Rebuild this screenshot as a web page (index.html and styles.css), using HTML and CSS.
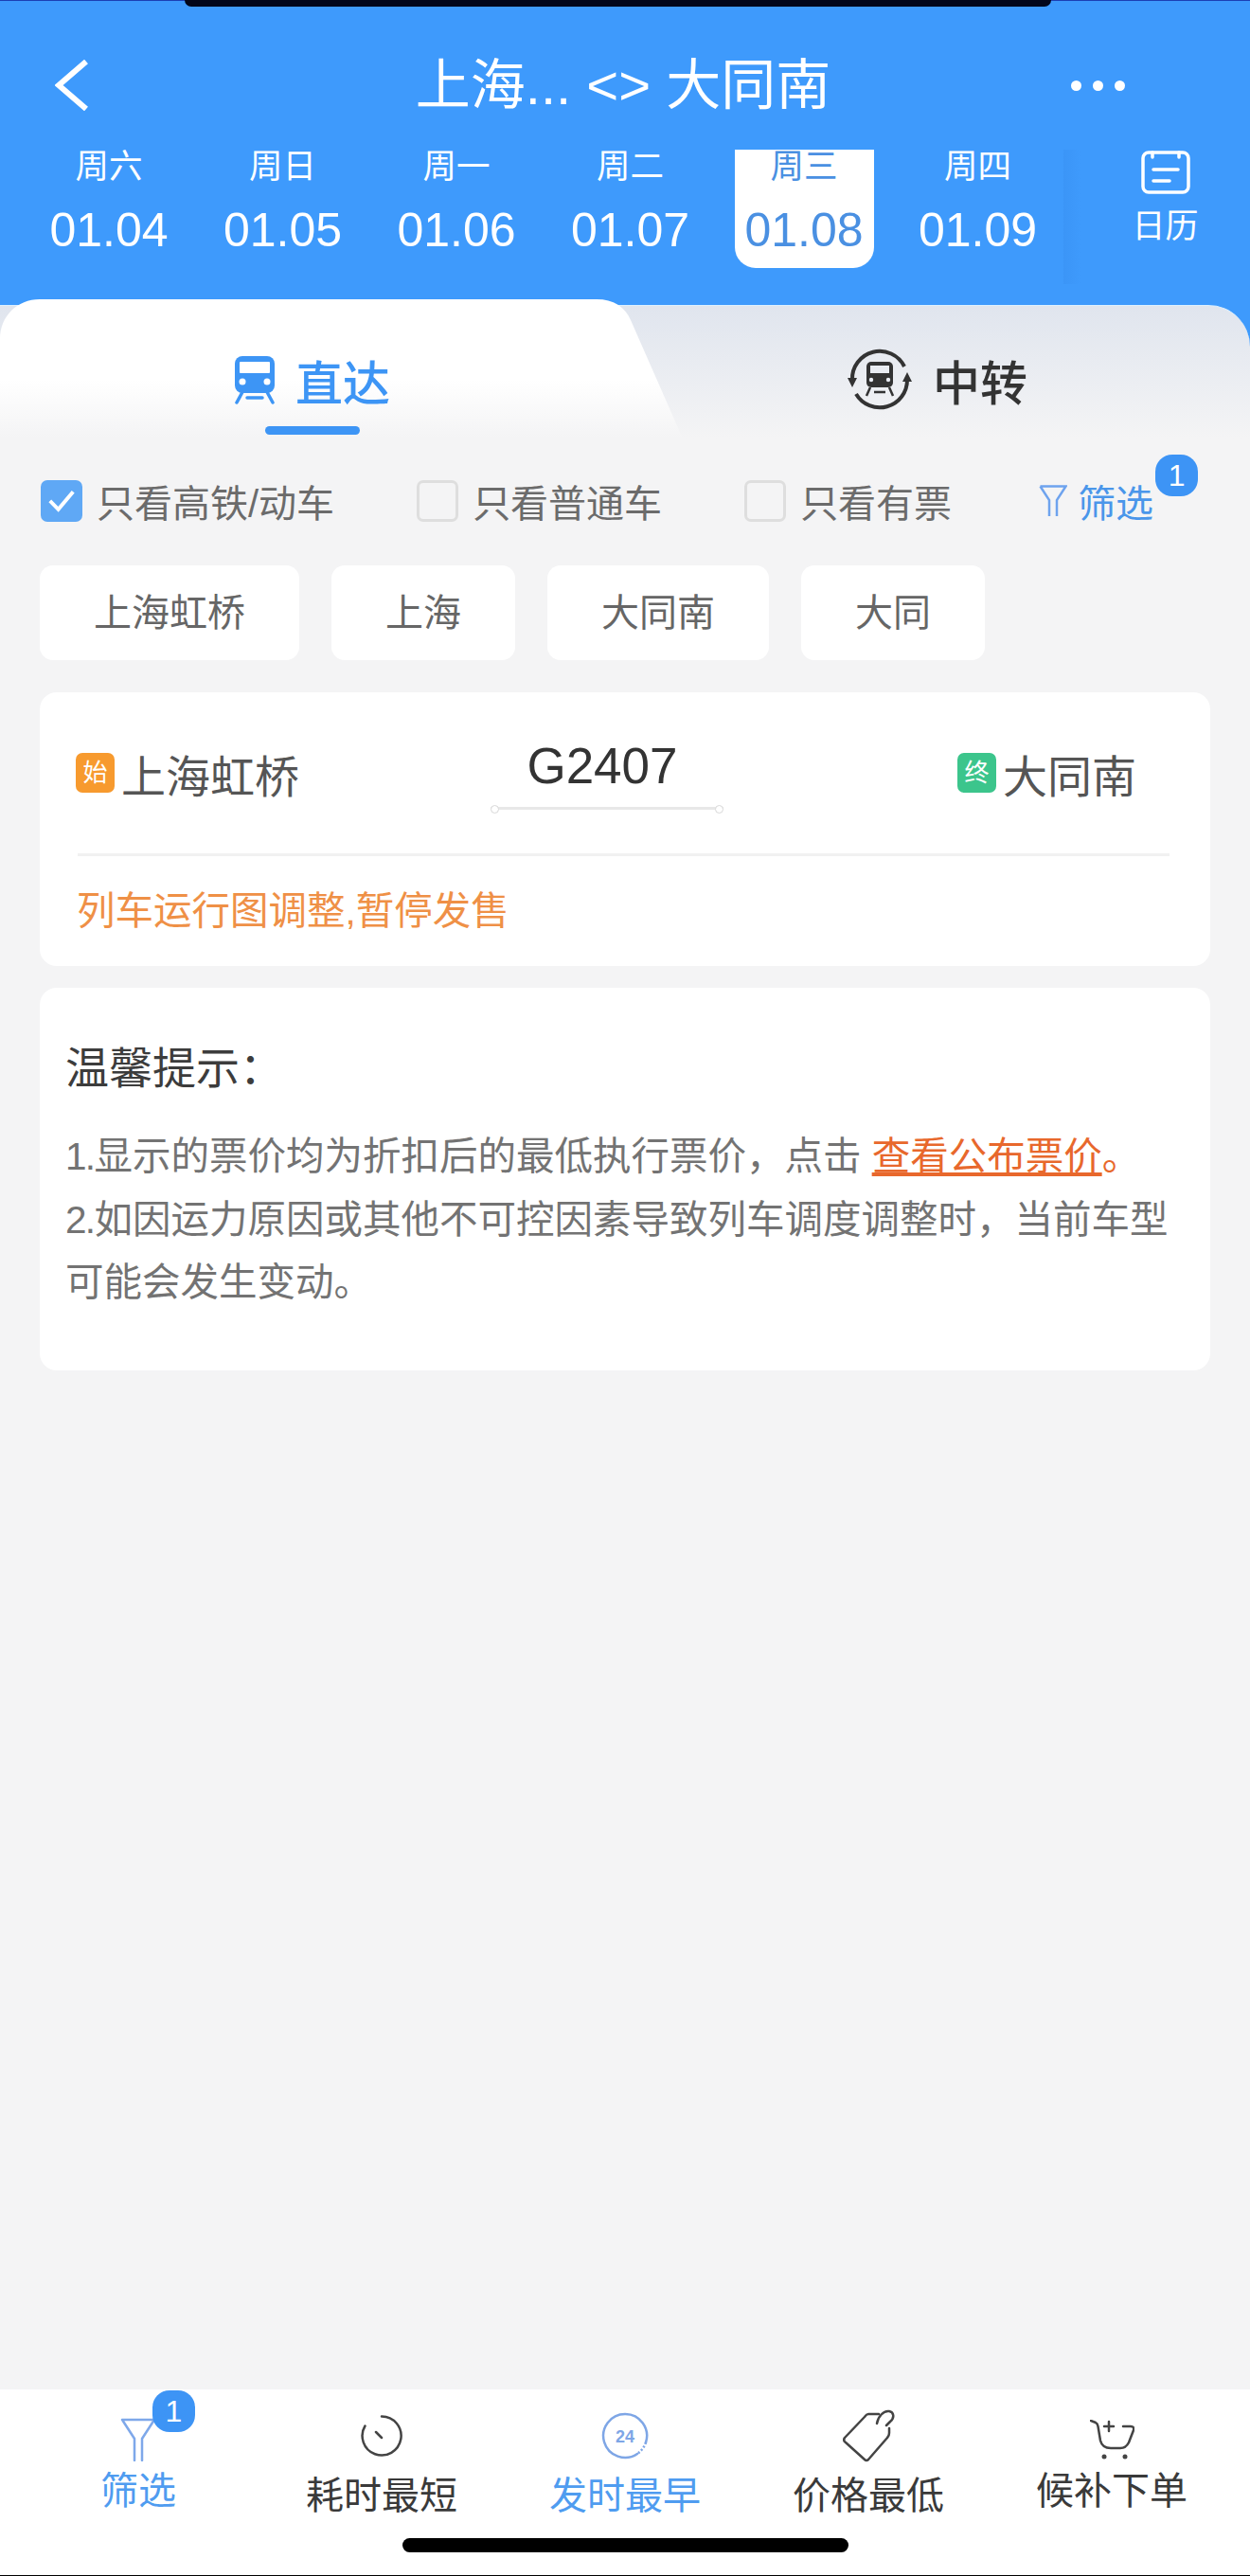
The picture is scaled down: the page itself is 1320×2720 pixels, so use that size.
FILE: index.html
```html
<!DOCTYPE html>
<html lang="zh-CN">
<head>
    <meta charset="UTF-8">
    <meta name="viewport" content="width=device-width, initial-scale=1.0">
    <title>上海 - 大同南</title>
    <link rel="stylesheet" href="styles.css">
</head>
<body>
    <div class="app">
        <div class="notch"></div>

        <header class="header">
            <div class="topbar">
                <svg class="back" viewBox="0 0 36 54"><path d="M33 2L4 27L33 52"/></svg>
                <div class="title">上海... &lt;&gt; 大同南</div>
                <div class="more"><i></i><i></i><i></i></div>
            </div>
            <div class="dates">
                <div class="date-list">
                    <div class="date"><span class="week">周六</span><span class="day">01.04</span></div>
                    <div class="date"><span class="week">周日</span><span class="day">01.05</span></div>
                    <div class="date"><span class="week">周一</span><span class="day">01.06</span></div>
                    <div class="date"><span class="week">周二</span><span class="day">01.07</span></div>
                    <div class="date date-active"><span class="week">周三</span><span class="day">01.08</span></div>
                    <div class="date"><span class="week">周四</span><span class="day">01.09</span></div>
                </div>
                <div class="calendar">
                    <svg class="calendar-icon" viewBox="0 0 52 46">
                        <rect x="2" y="2" width="48" height="42" rx="6"/>
                        <path d="M12 2V7M40 2V7M13 20H39M13 32H30"/>
                    </svg>
                    <span>日历</span>
                </div>
            </div>
        </header>

        <main class="content">
            <div class="tabs">
                <div class="tab tab-direct">
                    <div class="tab-row">
                        <svg class="train-icon" viewBox="0 0 42 51">
                            <rect width="42" height="39" rx="8" fill="#3d95f5"/>
                            <rect x="5" y="6" width="32" height="12" rx="1" fill="#fff"/>
                            <circle cx="8" cy="27" r="3.5" fill="#fff"/>
                            <circle cx="34" cy="27" r="3.5" fill="#fff"/>
                            <path d="M8 38L2 49M34 38L40 49M13 44H29" stroke="#3d95f5" stroke-width="3.5" stroke-linecap="round"/>
                        </svg>
                        <span>直达</span>
                    </div>
                    <div class="tab-line"></div>
                </div>
                <div class="tab tab-transfer">
                    <div class="tab-row">
                        <svg class="transfer-icon" viewBox="0 0 68 68">
                            <path d="M5 34A29 29 0 0 1 60 20M63 34A29 29 0 0 1 9 49" fill="none" stroke="#333" stroke-width="4"/>
                            <path d="M0 32H10L5 42ZM58 36H68L63 26Z" fill="#333"/>
                            <rect x="20" y="15" width="28" height="27" rx="5" fill="#333"/>
                            <rect x="24" y="19" width="20" height="8" fill="#e9ecf2"/>
                            <circle cx="25" cy="34" r="2.2" fill="#e9ecf2"/>
                            <circle cx="43" cy="34" r="2.2" fill="#e9ecf2"/>
                            <path d="M24 42L20 51M44 42L48 51M28 47H40" stroke="#333" stroke-width="2.5"/>
                        </svg>
                        <span>中转</span>
                    </div>
                </div>
            </div>

            <div class="filters">
                <label class="check">
                    <span class="box box-on">
                        <svg viewBox="0 0 45 43"><path d="M10 22L19 31L35 12"/></svg>
                    </span>
                    只看高铁/动车
                </label>
                <label class="check"><span class="box"></span>只看普通车</label>
                <label class="check"><span class="box"></span>只看有票</label>
                <div class="filter-link">
                    <svg class="funnel" viewBox="0 0 30 34"><path d="M1.5 1.5H28.5L19 16V33M11 33V16L1.5 1.5"/></svg>
                    筛选
                    <span class="badge badge-top">1</span>
                </div>
            </div>

            <div class="chips">
                <div class="chip">上海虹桥</div>
                <div class="chip">上海</div>
                <div class="chip">大同南</div>
                <div class="chip">大同</div>
            </div>

            <section class="card train-card">
                <div class="train-row">
                    <div class="station">
                        <span class="tag tag-start">始</span>上海虹桥
                    </div>
                    <div class="train-no">
                        <span>G2407</span>
                        <div class="train-line"></div>
                    </div>
                    <div class="station station-end">
                        <span class="tag tag-end">终</span>大同南
                    </div>
                </div>
                <div class="divider"></div>
                <div class="alert">列车运行图调整,暂停发售</div>
            </section>

            <section class="card tips">
                <h2>温馨提示<span class="colon">：</span></h2>
                <p><span class="num">1.</span>显示的票价均为折扣后的最低执行票价，点击 <span class="orange"><u>查看公布票价</u>。</span></p>
                <p><span class="num">2.</span>如因运力原因或其他不可控因素导致列车调度调整时，当前车型</p>
                <p>可能会发生变动。</p>
            </section>
        </main>

        <footer class="bottom">
            <nav class="bottom-nav">
                <div class="nav-item nav-blue">
                    <div class="nav-icon">
                        <svg class="nav-funnel" viewBox="0 0 38 46"><path d="M2 2H36L23 22V45M15 45V22L2 2"/></svg>
                        <span class="badge badge-nav">1</span>
                    </div>
                    <span class="nav-label nav-label-up">筛选</span>
                </div>
                <div class="nav-item">
                    <div class="nav-icon">
                        <svg class="nav-timer" viewBox="0 0 46 46">
                            <path d="M23 2.500A20.500 20.500 0 1 1 5.500 12.500M17 19L23 25"/>
                        </svg>
                    </div>
                    <span class="nav-label">耗时最短</span>
                </div>
                <div class="nav-item nav-blue">
                    <div class="nav-icon">
                        <svg class="nav-clock" viewBox="0 0 50 50">
                            <path d="M38 44A23 23 0 1 1 47 32"/>
                            <path class="clock-dash" d="M47 32A23 23 0 0 1 38 44"/>
                            <text x="25" y="32" text-anchor="middle">24</text>
                        </svg>
                    </div>
                    <span class="nav-label">发时最早</span>
                </div>
                <div class="nav-item">
                    <div class="nav-icon">
                        <svg class="nav-tag" viewBox="0 0 55 56">
                            <path d="M38 5H27Q25 5 23 8L2 30Q0 33 3 35L23 53Q25 55 27 53L47 30Q49 28 49 25V20"/>
                            <path d="M36 15C37 8 43 1 49 2C54 3 55 9 50 13L46 17"/>
                        </svg>
                    </div>
                    <span class="nav-label">价格最低</span>
                </div>
                <div class="nav-item">
                    <div class="nav-icon">
                        <svg class="nav-cart" viewBox="0 0 47 42">
                            <path d="M1 1L6 3Q8 4 8.500 7L11 22Q13 30 22 30H32Q38 30 41 24L46 11Q47 7 43 7H35M15 7H25M20 2V12"/>
                            <circle cx="15" cy="39" r="2.500"/>
                            <circle cx="37" cy="39" r="2.500"/>
                        </svg>
                    </div>
                    <span class="nav-label nav-label-up">候补下单</span>
                </div>
            </nav>
            <div class="home-bar"></div>
        </footer>
    </div>
</body>
</html>
```

FILE: styles.css
```css
* {
    box-sizing: border-box;
}

body {
    margin: 0;
    font-family: "Liberation Sans", "Noto Sans CJK SC", sans-serif;
    background-color: #f4f4f5;
}

.app {
    position: relative;
    display: flex;
    flex-direction: column;
    height: 2720px;
    overflow: hidden;
    background-color: #f4f4f5;
}

.notch {
    position: absolute;
    top: 0;
    left: 195px;
    width: 915px;
    height: 7px;
    background-color: #02061a;
    border-radius: 0 0 20px 20px;
}

/* header */
.header {
    height: 316px;
    padding-top: 58px;
    color: #fff;
    background-color: #3e9afc;
    box-shadow: inset 0 1px #1c3fb4;
}

.topbar {
    display: grid;
    grid-template-columns: 1fr auto 1fr;
    align-items: center;
    height: 64px;
    padding: 0 62px 0 58px;
}

.back {
    width: 36px;
    height: 54px;
    fill: none;
    stroke: #fff;
    stroke-width: 6;
}

.title {
    font-size: 58px;
    line-height: 64px;
    white-space: nowrap;
}

.more {
    display: flex;
    justify-content: flex-end;
    gap: 12px;
    margin-right: 70px;
}

.more i {
    width: 11px;
    height: 11px;
    border-radius: 50%;
    background-color: #fff;
}

.dates {
    display: flex;
    margin-top: 36px;
}

.date-list {
    display: flex;
    flex: 0 0 1123px;
    gap: 36.5px;
    padding-left: 41.5px;
}

.date {
    width: 147px;
    height: 125px;
    text-align: center;
    white-space: nowrap;
}

.date-active {
    color: #4a90e2;
    background-color: #fff;
    border-radius: 0 0 22px 22px;
}

.week {
    display: block;
    height: 36px;
    font-size: 35.500px;
    line-height: 36px;
}

.day {
    display: block;
    margin-top: 21px;
    font-size: 50px;
    line-height: 56px;
}

.calendar {
    display: flex;
    flex: 1;
    flex-direction: column;
    align-items: center;
    height: 142px;
    padding-left: 18px;
    font-size: 35px;
    line-height: 44px;
    background: linear-gradient(90deg, #3b95f7, #3e9afc 9%);
}

.calendar-icon {
    flex: none;
    width: 52px;
    height: 46px;
    margin-top: 1px;
    margin-bottom: 12px;
    fill: none;
    stroke: #fff;
    stroke-width: 3.5;
    stroke-linecap: round;
}

/* tabs */
.tabs {
    position: relative;
    display: flex;
    height: 154px;
    background-color: #3e9afc;
}

.tabs::before {
    content: "";
    position: absolute;
    top: 6px;
    right: 0;
    bottom: 0;
    left: 0;
    border-top: 1px solid #dcf0ff;
    border-radius: 0 44px 0 0;
    background: linear-gradient(180deg, #e0e5ee, #f4f4f5 95%);
}

.tabs::after {
    content: "";
    position: absolute;
    top: 0;
    left: 0;
    width: 730px;
    height: 154px;
    background: linear-gradient(180deg, #fff 55%, #f4f4f5 95%);
    clip-path: path("M0 154V42C0 18 18 0 42 0H630C648 0 660 8 666 22L724 154Z");
}

.tab {
    position: relative;
    z-index: 1;
    display: flex;
    flex: 1;
    flex-direction: column;
    align-items: center;
    padding-top: 55px;
    font-size: 50px;
    font-weight: 500;
}

.tab-row {
    display: flex;
    align-items: center;
    gap: 22px;
    height: 60px;
}

.tab-direct {
    color: #3d95f5;
}

.tab-transfer {
    color: #333;
}

.train-icon {
    width: 42px;
    height: 51px;
}

.transfer-icon {
    width: 68px;
    height: 68px;
}

.tab-line {
    width: 100px;
    height: 9px;
    margin-top: 19px;
    border-radius: 5px;
    background-color: #3d95f5;
}

/* filter row */
.filters {
    display: flex;
    align-items: center;
    gap: 87px;
    height: 44px;
    margin-top: 37px;
    padding-left: 43px;
    font-size: 40px;
    color: #6b6b6b;
    white-space: nowrap;
}

.check {
    display: flex;
    align-items: center;
    gap: 15px;
}

.box {
    width: 44px;
    height: 44px;
    border: 3px solid #dedede;
    border-radius: 7px;
}

.box-on {
    border: 0;
    background-color: #5fa8f5;
}

.box-on svg {
    display: block;
    width: 44px;
    height: 43px;
    fill: none;
    stroke: #fff;
    stroke-width: 4;
}

.filter-link {
    position: relative;
    display: flex;
    align-items: center;
    gap: 11px;
    margin-left: 5px;
    color: #4a96ea;
}

.funnel {
    width: 30px;
    height: 34px;
    fill: none;
    stroke: #6ea3ee;
    stroke-width: 2.5;
}

.badge {
    position: absolute;
    width: 45px;
    height: 44px;
    border-radius: 18px;
    font-size: 32px;
    line-height: 44px;
    text-align: center;
    color: #fff;
    background-color: #3d94f5;
}

.badge-top {
    top: -20px;
    left: 123px;
}

.badge-nav {
    top: -20px;
    left: 34px;
}

/* station chips */
.chips {
    display: flex;
    gap: 34px;
    margin-top: 46px;
    padding-left: 42px;
}

.chip {
    height: 100px;
    padding: 0 57px;
    border-radius: 14px;
    font-size: 40px;
    line-height: 100px;
    color: #666;
    background-color: #fff;
}

/* cards */
.card {
    margin: 0 42px;
    border-radius: 18px;
    background-color: #fff;
}

.train-card {
    height: 289px;
    margin-top: 34px;
    padding: 50px 43px 0 38px;
}

.train-row {
    display: grid;
    grid-template-columns: 438px 246px 1fr;
    height: 120px;
}

.station {
    display: flex;
    align-items: center;
    gap: 7px;
    height: 70px;
    font-size: 47px;
    color: #555;
}

.station-end {
    margin-left: 247px;
    white-space: nowrap;
}

.tag {
    width: 41px;
    height: 42px;
    border-radius: 7px;
    font-size: 26px;
    line-height: 42px;
    text-align: center;
    color: #fff;
}

.tag-start {
    background-color: #f79a2e;
}

.tag-end {
    background-color: #3cc58c;
}

.train-no {
    text-align: center;
    font-size: 53px;
    line-height: 56px;
    color: #333;
}

.train-no span {
    position: relative;
    left: -5px;
}

.train-line {
    position: relative;
    height: 3px;
    margin-top: 15px;
    background-color: #e8e8e8;
}

.train-line::before,
.train-line::after {
    content: "";
    position: absolute;
    top: -2px;
    width: 7px;
    height: 7px;
    border: 1px solid #d8d8d8;
    border-radius: 50%;
    background-color: #fff;
}

.train-line::before {
    left: 0;
}

.train-line::after {
    right: 0;
}

.divider {
    height: 3px;
    margin-left: 2px;
    background-color: #f1f1f1;
}

.alert {
    margin-top: 33px;
    margin-left: 1px;
    font-size: 40.500px;
    line-height: 50px;
    color: #ef9046;
    white-space: nowrap;
}

.tips {
    height: 404px;
    margin-top: 23px;
    padding: 54px 20px 0 27px;
}

.tips h2 {
    margin: 0 0 33px;
    font-size: 46px;
    font-weight: 400;
    line-height: 54px;
    color: #3c3c3c;
}

.colon {
    font-family: "Noto Sans CJK TC", sans-serif;
}

.tips p {
    margin: 0;
    font-size: 40.500px;
    line-height: 66.500px;
    color: #737373;
    white-space: nowrap;
}

.num {
    letter-spacing: -1.700px;
}

.orange {
    color: #e8682c;
}

/* bottom bar */
.bottom {
    display: flex;
    flex-direction: column;
    align-items: center;
    height: 197px;
    margin-top: auto;
    padding-top: 21px;
    border-bottom: 1px solid #000;
    background-color: #fff;
}

.bottom-nav {
    display: grid;
    grid-template-columns: repeat(5, 257px);
    justify-content: center;
    width: 100%;
}

.nav-item {
    display: flex;
    flex-direction: column;
    align-items: center;
    color: #3a3a3a;
}

.nav-blue {
    color: #4f9cf0;
}

.nav-icon {
    position: relative;
    display: flex;
    align-items: center;
    justify-content: center;
    height: 56px;
}

.nav-icon svg {
    display: block;
    fill: none;
    stroke: #444;
    stroke-width: 2.500;
    stroke-linecap: round;
    stroke-linejoin: round;
}

.nav-label {
    margin-top: 13px;
    font-size: 40px;
    line-height: 44px;
    white-space: nowrap;
}

.nav-label-up {
    margin-top: 8px;
}

.nav-icon .nav-funnel {
    width: 38px;
    height: 46px;
    margin-top: 8px;
    stroke: #7ea8ea;
}

.nav-timer {
    width: 46px;
    height: 46px;
}

.nav-icon .nav-clock {
    width: 50px;
    height: 50px;
    stroke: #7ea6e6;
}

.nav-icon .nav-clock .clock-dash {
    stroke-dasharray: 2 2;
    stroke-linecap: butt;
}

.nav-clock text {
    font-size: 18px;
    font-weight: 700;
    fill: #7ea6e6;
    stroke: none;
}

.nav-tag {
    width: 55px;
    height: 56px;
}

.nav-cart {
    width: 47px;
    height: 42px;
    margin-top: 8px;
}

.nav-cart circle {
    fill: #444;
    stroke: none;
}

.home-bar {
    width: 471px;
    height: 15px;
    margin-top: 23px;
    border-radius: 8px;
    background-color: #000;
}
```
